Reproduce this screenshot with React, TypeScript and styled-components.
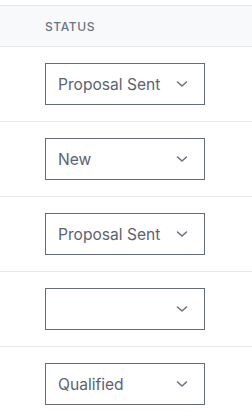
import React from "react";
import styled, { createGlobalStyle } from "styled-components";

const Global = createGlobalStyle`
  html, body { margin: 0; padding: 0; background: #ffffff; }
  body { font-family: Inter, "Noto Sans", sans-serif; }
`;

const Table = styled.div`
  margin-top: 5px;
  width: 252px;
  display: flex;
  flex-direction: column;
`;

const HeaderRow = styled.div`
  height: 40px;
  display: flex;
  align-items: center;
  padding-left: 45px;
  background: #f8f9fb;
  border-top: 1px solid #e5e7eb;
  border-bottom: 1px solid #e5e7eb;
`;

const HeaderCell = styled.span`
  font-size: 12px;
  font-weight: 500;
  letter-spacing: 0.05em;
  text-transform: uppercase;
  color: #6b7280;
`;

const Row = styled.div`
  display: flex;
  align-items: center;
  padding: 16px 0 16px 45px;
  border-bottom: 1px solid #e5e7eb;
`;

const Select = styled.div`
  box-sizing: border-box;
  width: 160px;
  height: 42px;
  border: 1px solid #646b78;
  display: flex;
  align-items: center;
  justify-content: space-between;
  padding: 0 16px 0 12px;
  background: #ffffff;
`;

const Value = styled.span`
  font-size: 15.6px;
  color: #5b6372;
  white-space: nowrap;
`;

const Chevron = () => (
  <svg width="12" height="8" viewBox="0 0 12 8" fill="none">
    <path d="M1.5 2 L6 6 L10.5 2" stroke="#6b7280" strokeWidth="1.6" strokeLinecap="round" strokeLinejoin="round" />
  </svg>
);

const statuses = ["Proposal Sent", "New", "Proposal Sent", "", "Qualified"];

export default function App() {
  return (
    <>
      <Global />
      <Table>
        <HeaderRow>
          <HeaderCell>Status</HeaderCell>
        </HeaderRow>
        {statuses.map((s, i) => (
          <Row key={i}>
            <Select>
              <Value>{s}</Value>
              <Chevron />
            </Select>
          </Row>
        ))}
      </Table>
    </>
  );
}
